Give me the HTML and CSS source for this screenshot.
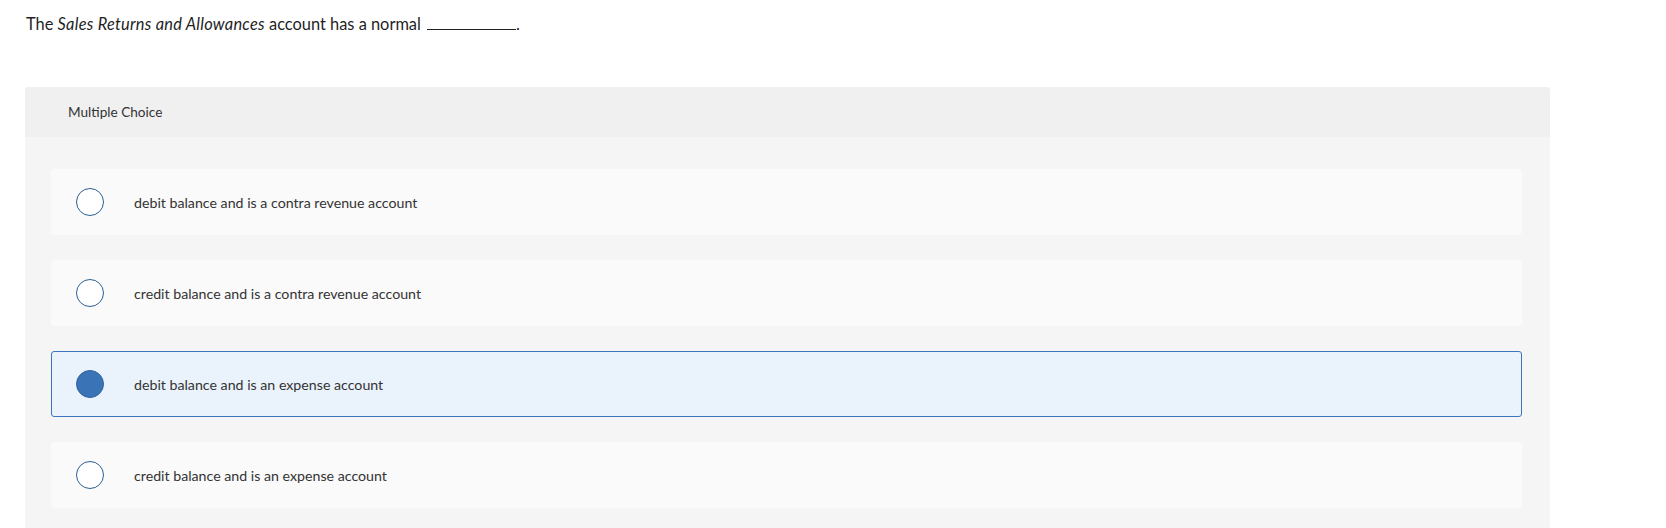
FILE: index.html
```html
<!DOCTYPE html>
<html lang="en">
<head>
<meta charset="utf-8">
<title>Multiple Choice</title>
<link rel="stylesheet" href="styles.css">
</head>
<body>
<div class="page">
  <p class="question">The <em>Sales Returns and Allowances</em> account has a normal <span class="blank"></span>.</p>
  <section class="panel">
    <header class="panel-head">Multiple Choice</header>
    <div class="panel-body">
      <label class="option">
        <span class="radio"></span>
        <span class="opt-text">debit balance and is a contra revenue account</span>
      </label>
      <label class="option">
        <span class="radio"></span>
        <span class="opt-text">credit balance and is a contra revenue account</span>
      </label>
      <label class="option selected">
        <span class="radio"></span>
        <span class="opt-text">debit balance and is an expense account</span>
      </label>
      <label class="option">
        <span class="radio"></span>
        <span class="opt-text">credit balance and is an expense account</span>
      </label>
    </div>
  </section>
</div>
</body>
</html>
```

FILE: styles.css
```css
html, body {
  margin: 0;
  padding: 0;
  background: #ffffff;
}

body {
  font-family: Lato, "Liberation Sans", Arial, sans-serif;
  color: #222222;
}

.page {
  padding: 14px 116px 0 25px;
}

.question {
  margin: 0 0 0 1px;
  font-size: 16.4px;
  line-height: 20px;
  color: #1f1f1f;
}

.question em {
  font-style: italic;
  letter-spacing: 0.25px;
}

.blank {
  display: inline-block;
  width: 89px;
  height: 1px;
  border-bottom: 1px solid #222222;
  margin-left: 2px;
  vertical-align: baseline;
}

.panel {
  margin-top: 53px;
  background: #f5f5f5;
  border-radius: 3px 3px 0 0;
  width: 1525px;
}

.panel-head {
  height: 50px;
  display: flex;
  align-items: center;
  padding-left: 43px;
  background: #f0f0f0;
  border-radius: 3px 3px 0 0;
  font-size: 13.6px;
  color: #333333;
}

.panel-body {
  padding: 32px 28px 20px 26px;
  display: flex;
  flex-direction: column;
  gap: 25px;
}

.option {
  box-sizing: border-box;
  height: 66px;
  display: flex;
  align-items: center;
  padding-left: 25px;
  background: #fafafa;
  border: 1px solid #fafafa;
  border-radius: 3px;
}

.option.selected {
  background: #eaf2fb;
  border-color: #3b76bd;
}

.radio {
  box-sizing: border-box;
  width: 28px;
  height: 28px;
  flex: none;
  border-radius: 50%;
  border: 1.5px solid #2e5f94;
  background: #ffffff;
  margin-left: -1px;
}

.option.selected .radio {
  background: #3a74b7;
  border-color: #2f62a0;
}

.opt-text {
  margin-left: 30px;
  font-size: 14.2px;
  color: #333333;
}
```
